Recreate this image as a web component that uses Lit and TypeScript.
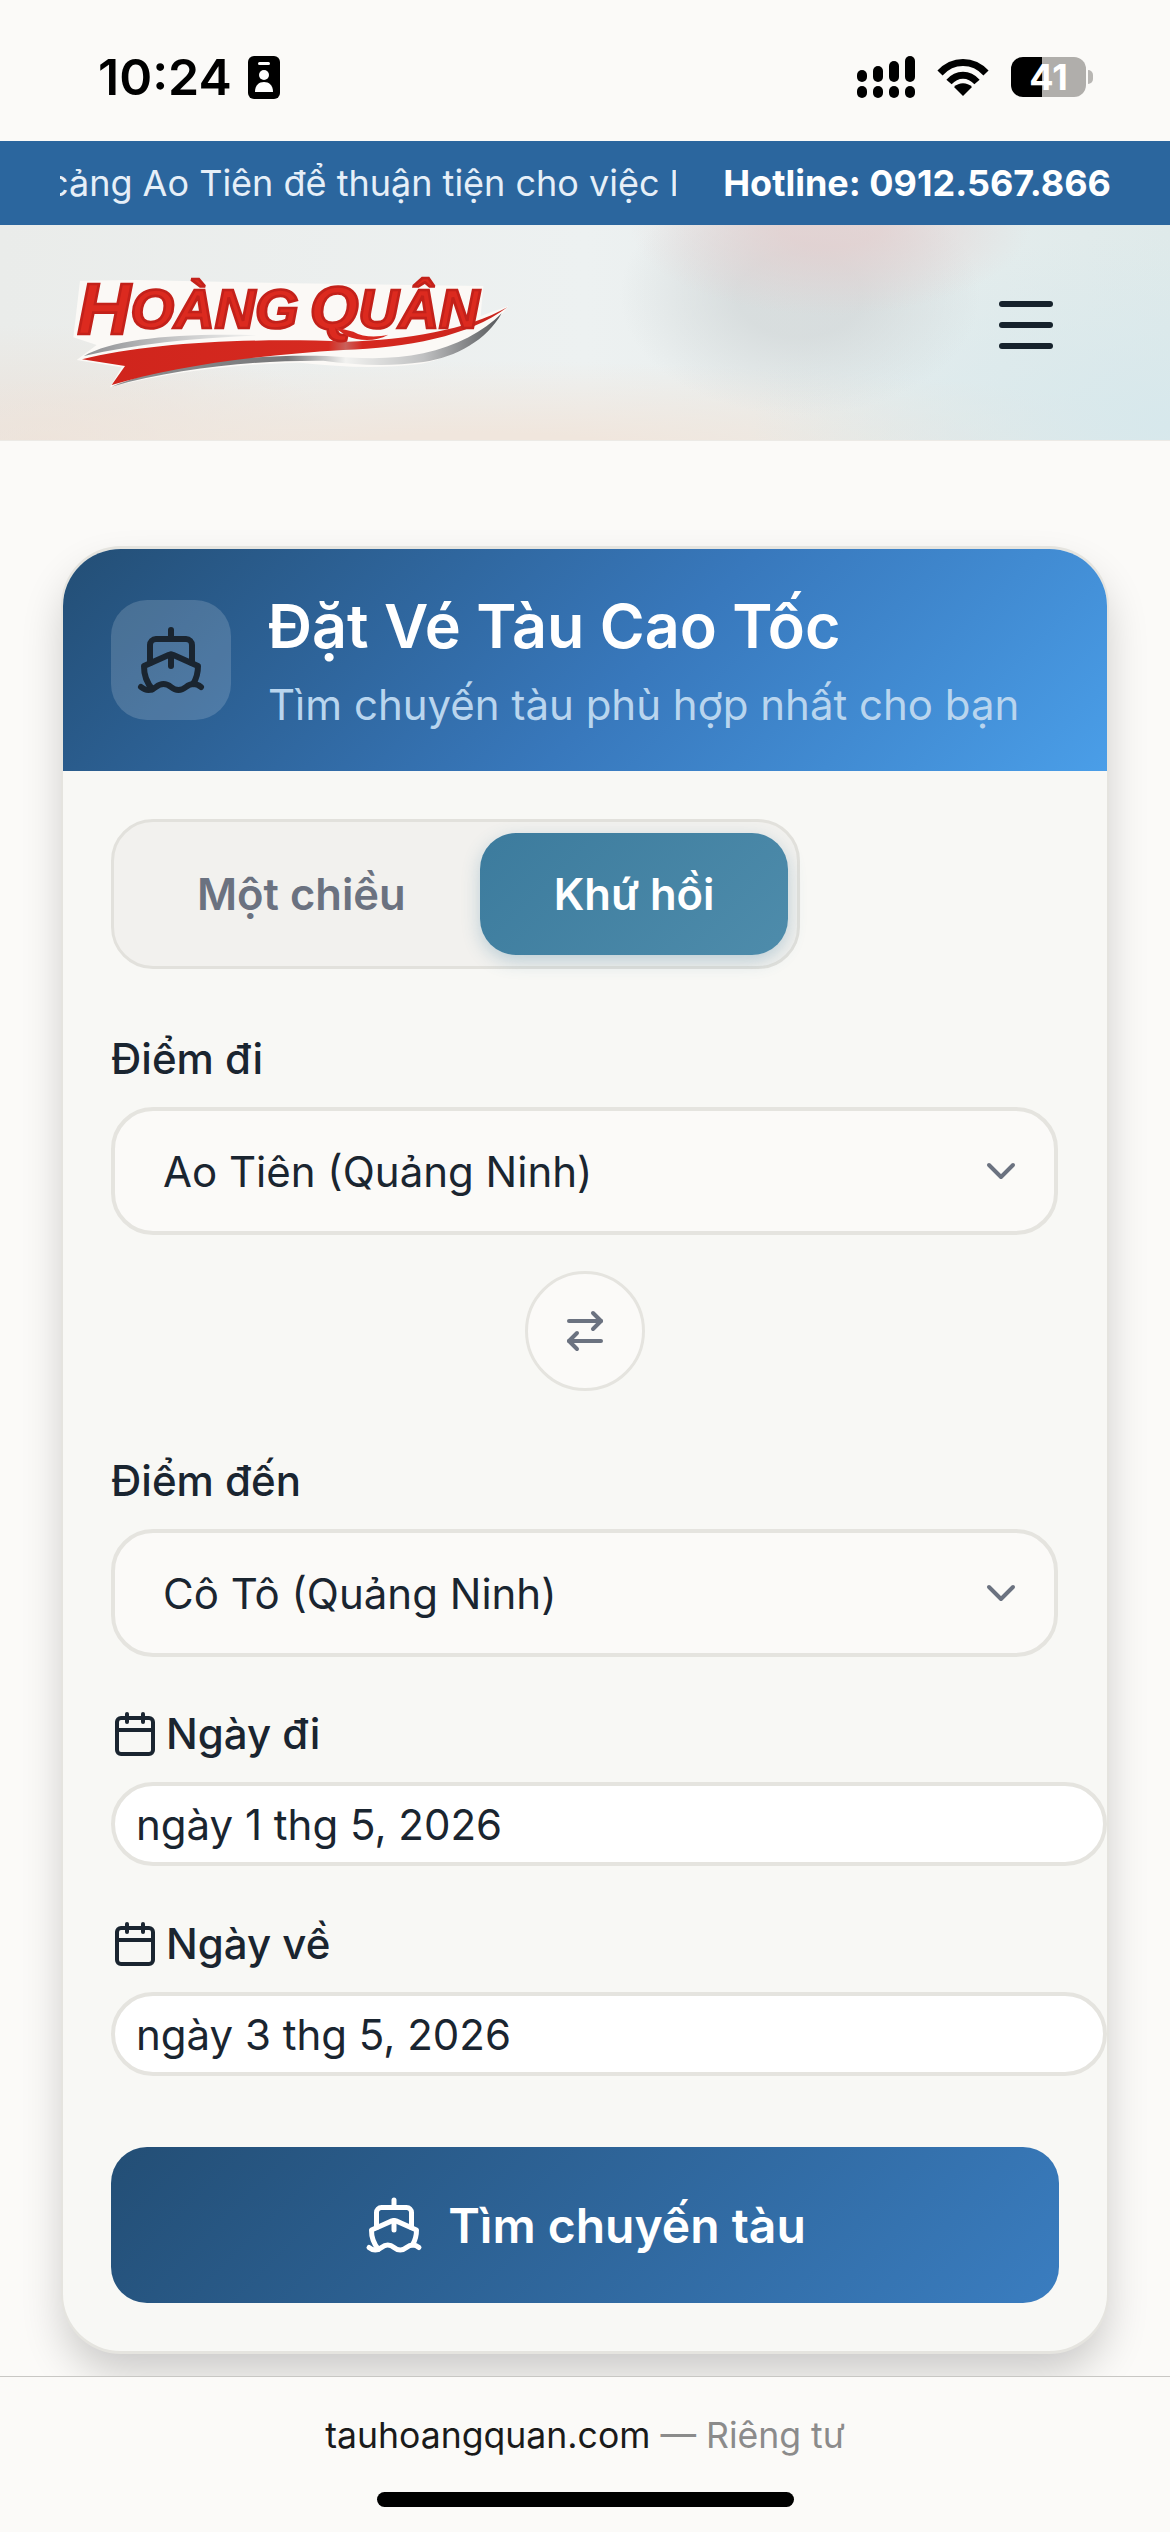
import { LitElement, html, css, svg } from "lit";
import { customElement } from "lit/decorators.js";

const shipPaths = svg`
  <path d="M12 10.189V14" /><path d="M12 2v3" />
  <path d="M19 13V7a2 2 0 0 0-2-2H7a2 2 0 0 0-2 2v6" />
  <path d="M19.38 20A11.6 11.6 0 0 0 21 14l-8.188-3.639a2 2 0 0 0-1.624 0L3 14a11.6 11.6 0 0 0 2.81 7.76" />
  <path d="M2 21c.6.5 1.2 1 2.5 1 2.5 0 2.5-2 5-2 1.3 0 1.9.5 2.5 1s1.2 1 2.5 1c2.5 0 2.5-2 5-2 1.3 0 1.9.5 2.5 1" />
`;

const icon = (cls: string, body: unknown) => html`
  <svg class=${cls} viewBox="0 0 24 24" fill="none" stroke="currentColor" stroke-width="2"
    stroke-linecap="round" stroke-linejoin="round">${body}</svg>
`;

const calendar = () => icon("cal", svg`
  <path d="M8 2v4" /><path d="M16 2v4" />
  <rect width="18" height="18" x="3" y="4" rx="2" /><path d="M3 10h18" />
`);

const chevron = () => icon("chev", svg`<path d="m6 9 6 6 6-6" />`);

const logo = html`
  <svg class="logo" viewBox="0 0 1380 420">
    <defs>
      <linearGradient id="silver" x1="0" x2="1">
        <stop offset="0" stop-color="#8d8f92" />
        <stop offset="0.5" stop-color="#c4c5c6" />
        <stop offset="1" stop-color="#f4f4f2" />
      </linearGradient>
      <linearGradient id="silver2" x1="0" x2="1">
        <stop offset="0" stop-color="#8f9092" />
        <stop offset="0.45" stop-color="#77787a" />
        <stop offset="0.6" stop-color="#f2f2f0" />
        <stop offset="0.8" stop-color="#bfc0c1" />
        <stop offset="1" stop-color="#55575a" />
      </linearGradient>
      <linearGradient id="redfade" x1="0" x2="1">
        <stop offset="0" stop-color="#cf241c" />
        <stop offset="0.58" stop-color="#d62a20" />
        <stop offset="0.62" stop-color="#c9605a" />
        <stop offset="0.66" stop-color="#d6281f" />
        <stop offset="1" stop-color="#c9251d" />
      </linearGradient>
    </defs>
    <path fill="#fbf9f6" d="M40 232 60 62 225 60 700 70 1270 78 1262 168 1345 138C1290 215 1200 290 1080 312 960 326 850 322 720 308 500 312 300 344 150 382L185 322 50 300 110 255Z" />
    <path fill="url(#silver)" d="M72 288C160 236 360 218 600 226 400 234 230 252 72 288Z" />
    <path fill="url(#silver2)" d="M155 380C330 310 560 282 800 288 900 296 1000 300 1090 280 1190 258 1270 215 1325 160 1280 240 1190 292 1090 306 980 322 880 314 790 302 590 300 350 324 155 380Z" />
    <path fill="url(#redfade)" d="M66 298C260 250 560 232 862 245 1040 240 1220 210 1342 142 1225 230 1040 264 850 270 560 288 330 322 155 375L195 318Z" />
    <g font-family="'Liberation Sans', Arial, sans-serif" font-weight="700" font-style="italic"
      fill="#dc2a1f" stroke="#c3211a" stroke-width="8">
      <text x="52" y="222" textLength="664" lengthAdjust="spacingAndGlyphs"><tspan font-size="216">H</tspan><tspan font-size="164" dy="-17">OÀNG</tspan></text>
      <text x="749" y="206" textLength="509" lengthAdjust="spacingAndGlyphs"><tspan font-size="184">Q</tspan><tspan font-size="164" dy="-3">UÂN</tspan></text>
    </g>
    <path fill="#d6281f" d="M820 200 880 215C910 232 950 232 985 224 945 246 900 244 860 228Z" />
  </svg>
`;

@customElement("app-root")
export class AppRoot extends LitElement {
  static styles = css`
    :host {
      display: block;
      width: 1170px;
      height: 2532px;
      overflow: hidden;
      background: #fbfaf8;
      font-family: Inter, "Noto Sans", sans-serif;
      color: #1a2530;
    }
    .page {
      display: flex;
      flex-direction: column;
      height: 2532px;
    }
    .status {
      height: 141px;
      box-sizing: border-box;
      padding: 56px 84px 0 98px;
      display: flex;
      justify-content: space-between;
      align-items: flex-start;
      color: #000;
    }
    .status-left {
      display: flex;
      align-items: center;
      gap: 16px;
    }
    .time {
      font-size: 50px;
      font-weight: 600;
      line-height: 43px;
    }
    .id-badge {
      width: 32px;
      height: 43px;
    }
    .status-right {
      display: flex;
      align-items: center;
      height: 42px;
      gap: 22px;
    }
    .signal {
      width: 58px;
      height: 42px;
    }
    .wifi {
      width: 52px;
      height: 38px;
    }
    .battery {
      position: relative;
      width: 75px;
      height: 40px;
      border-radius: 12px;
      background: linear-gradient(90deg, #000 41%, #b0aeab 41%);
      color: #fff;
      font-size: 36px;
      font-weight: 700;
      line-height: 40px;
      text-align: center;
    }
    .battery::after {
      content: "";
      position: absolute;
      left: 77px;
      top: 13px;
      width: 5px;
      height: 14px;
      border-radius: 0 7px 7px 0;
      background: #b8b6b3;
    }
    .ticker {
      height: 84px;
      box-sizing: border-box;
      padding: 0 59px 0 60px;
      display: flex;
      align-items: center;
      justify-content: space-between;
      background: #2b669e;
      color: #fff;
      font-size: 36px;
    }
    .ticker-clip {
      width: 616px;
      overflow: hidden;
      white-space: nowrap;
      color: #e6eff8;
    }
    .ticker-track {
      display: inline-block;
      margin-left: -12px;
    }
    .hotline {
      font-weight: 700;
      white-space: nowrap;
    }
    .header {
      height: 216px;
      box-sizing: border-box;
      padding: 0 117px 6px 60px;
      display: flex;
      align-items: center;
      justify-content: space-between;
      background:
        radial-gradient(ellipse 200px 90px at 830px 0, rgba(228, 205, 205, 0.7) 25%, transparent),
        radial-gradient(ellipse 180px 120px at 800px 70px, rgba(209, 214, 215, 0.7) 35%, transparent),
        radial-gradient(ellipse 420px 190px at 1170px 200px, #d7e8ec, transparent),
        radial-gradient(ellipse 760px 90px at 480px 226px, #f0e6dd 20%, transparent),
        radial-gradient(ellipse 300px 120px at 40px 220px, #ebe1d9, transparent),
        linear-gradient(90deg, #eaecea, #edf1f1 50%, #dfeaea);
      border-bottom: 1px solid #eceae6;
    }
    .logo {
      width: 460px;
      height: 140px;
    }
    .burger {
      display: flex;
      flex-direction: column;
      gap: 15px;
      margin-bottom: 10px;
    }
    .burger span {
      display: block;
      width: 54px;
      height: 6px;
      border-radius: 3px;
      background: #16222c;
    }
    .main {
      flex: 1;
      min-height: 0;
      padding: 105px 61px 0 61px;
    }
    .card {
      height: 1808px;
      box-sizing: border-box;
      border-style: solid;
      border-color: #e5e4df;
      border-width: 3px 2px;
      border-radius: 60px;
      background: #f8f8f5;
      overflow: hidden;
      box-shadow: 0 22px 44px -4px rgba(0, 0, 0, 0.2);
    }
    .card-head {
      height: 222px;
      box-sizing: border-box;
      padding: 51px 0 0 48px;
      display: flex;
      gap: 37px;
      background: linear-gradient(135deg, #234e75 0%, #3878bc 55%, #4a9ee8 100%);
    }
    .head-icon {
      width: 120px;
      height: 120px;
      border-radius: 36px;
      background: rgba(255, 255, 255, 0.16);
      display: flex;
      align-items: center;
      justify-content: center;
      color: #1a2530;
    }
    .head-icon svg {
      width: 72px;
      height: 72px;
    }
    .head-text h1 {
      margin: -13px 0 0;
      font-size: 61px;
      font-weight: 600;
      line-height: 78px;
      color: #fff;
    }
    .head-text p {
      margin: 10px 0 0;
      font-size: 42px;
      line-height: 60px;
      color: #b9d5ee;
    }
    .body {
      padding: 48px 0 0 48px;
    }
    .toggle {
      display: inline-flex;
      box-sizing: border-box;
      height: 150px;
      padding: 11px 9px;
      border: 3px solid #e2e1dc;
      border-radius: 42px;
      background: #f2f1ee;
    }
    .seg {
      height: 122px;
      line-height: 122px;
      padding: 0 74px;
      border-radius: 36px;
      font-size: 43.5px;
      font-weight: 600;
      color: #6b7280;
    }
    .seg.active {
      color: #fff;
      background: linear-gradient(135deg, #3c7b9d, #4e8cab);
      box-shadow: 0 6px 18px rgba(63, 125, 159, 0.3);
    }
    .label {
      display: flex;
      align-items: center;
      gap: 7px;
      font-size: 42px;
      font-weight: 500;
      line-height: 60px;
    }
    .label.first,
    .label.dest {
      margin-top: 60px;
    }
    .select {
      box-sizing: border-box;
      width: 947px;
      height: 128px;
      margin-top: 18px;
      padding: 0 29px 0 48px;
      display: flex;
      align-items: center;
      justify-content: space-between;
      border: 4px solid #e5e4df;
      border-radius: 42px;
      background: #fbfaf8;
      font-size: 42px;
    }
    .cal {
      width: 48px;
      height: 48px;
    }
    .chev {
      width: 48px;
      height: 48px;
      color: #6b7280;
    }
    .swap-row {
      display: flex;
      justify-content: center;
      width: 947px;
      margin-top: 36px;
    }
    .swap {
      box-sizing: border-box;
      width: 120px;
      height: 120px;
      border: 3px solid #e5e4df;
      border-radius: 50%;
      background: #fbfaf8;
      display: flex;
      align-items: center;
      justify-content: center;
      color: #6b7280;
    }
    .swap svg {
      width: 48px;
      height: 48px;
    }
    .date-label {
      margin-top: 47px;
    }
    .date-label.next {
      margin-top: 48px;
    }
    .date {
      box-sizing: border-box;
      width: 996px;
      height: 84px;
      margin-top: 18px;
      padding-left: 21px;
      display: flex;
      align-items: center;
      border: 4px solid #e5e4df;
      border-radius: 42px;
      background: #fff;
      font-size: 42px;
    }
    .submit {
      box-sizing: border-box;
      width: 948px;
      height: 156px;
      margin-top: 71px;
      display: flex;
      align-items: center;
      justify-content: center;
      gap: 24px;
      border-radius: 36px;
      background: linear-gradient(135deg, #234e75, #3a7dc0);
      color: #fff;
      font-size: 48px;
      font-weight: 600;
    }
    .submit svg {
      width: 60px;
      height: 60px;
    }
    .footer {
      position: relative;
      height: 156px;
      box-sizing: border-box;
      border-top: 1px solid #c8c7c4;
      background: #fbfaf8;
      display: flex;
      flex-direction: column;
      align-items: center;
      padding-top: 37px;
    }
    .address {
      font-size: 35.6px;
      line-height: 44px;
      color: #1a1a1a;
    }
    .address span {
      color: #8b8b8b;
    }
    .home {
      width: 417px;
      height: 15px;
      margin-top: 34px;
      border-radius: 8px;
      background: #000;
    }
  `;

  render() {
    return html`
      <div class="page">
        <div class="status">
          <div class="status-left">
            <span class="time">10:24</span>
            <svg class="id-badge" viewBox="0 0 32 43">
              <rect width="32" height="43" rx="6" fill="#000" />
              <rect x="10" y="6" width="12" height="3" rx="1.5" fill="#fff" />
              <circle cx="16" cy="19" r="5" fill="#fff" />
              <path d="M7 36c0-7 4-10 9-10s9 3 9 10z" fill="#fff" />
            </svg>
          </div>
          <div class="status-right">
            <svg class="signal" viewBox="0 0 58 42">
              <g fill="#000">
                <rect x="0" y="14" width="10" height="12" rx="5" />
                <rect x="16" y="10" width="10" height="16" rx="5" />
                <rect x="32" y="5" width="10" height="21" rx="5" />
                <rect x="48" y="0" width="10" height="26" rx="5" />
                <rect x="0" y="30" width="10" height="12" rx="5" />
                <rect x="16" y="30" width="10" height="12" rx="5" />
                <rect x="32" y="30" width="10" height="12" rx="5" />
                <rect x="48" y="30" width="10" height="12" rx="5" />
              </g>
            </svg>
            <svg class="wifi" viewBox="0 0 52 38">
              <g fill="none" stroke="#000" stroke-width="7">
                <path d="M3 15C16 1 36 1 49 15" />
                <path d="M12 24C20 15 32 15 40 24" />
              </g>
              <path d="M17 29C22 24 30 24 35 29L26 38Z" fill="#000" />
            </svg>
            <div class="battery">41</div>
          </div>
        </div>

        <div class="ticker">
          <div class="ticker-clip">
            <span class="ticker-track">cảng Ao Tiên để thuận tiện cho việc lên</span>
          </div>
          <span class="hotline">Hotline: 0912.567.866</span>
        </div>

        <div class="header">
          ${logo}
          <div class="burger"><span></span><span></span><span></span></div>
        </div>

        <div class="main">
          <div class="card">
            <div class="card-head">
              <div class="head-icon">${icon("", shipPaths)}</div>
              <div class="head-text">
                <h1>Đặt Vé Tàu Cao Tốc</h1>
                <p>Tìm chuyến tàu phù hợp nhất cho bạn</p>
              </div>
            </div>
            <div class="body">
              <div class="toggle">
                <div class="seg">Một chiều</div>
                <div class="seg active">Khứ hồi</div>
              </div>

              <div class="label first">Điểm đi</div>
              <div class="select">Ao Tiên (Quảng Ninh) ${chevron()}</div>

              <div class="swap-row">
                <div class="swap">
                  ${icon("", svg`
                    <path d="m16 3 4 4-4 4" /><path d="M20 7H4" />
                    <path d="m8 21-4-4 4-4" /><path d="M4 17h16" />
                  `)}
                </div>
              </div>

              <div class="label dest">Điểm đến</div>
              <div class="select">Cô Tô (Quảng Ninh) ${chevron()}</div>

              <div class="label date-label">${calendar()} Ngày đi</div>
              <div class="date">ngày 1 thg 5, 2026</div>

              <div class="label date-label next">${calendar()} Ngày về</div>
              <div class="date">ngày 3 thg 5, 2026</div>

              <div class="submit">${icon("", shipPaths)} Tìm chuyến tàu</div>
            </div>
          </div>
        </div>

        <div class="footer">
          <div class="address">tauhoangquan.com <span>— Riêng tư</span></div>
          <div class="home"></div>
        </div>
      </div>
    `;
  }
}
